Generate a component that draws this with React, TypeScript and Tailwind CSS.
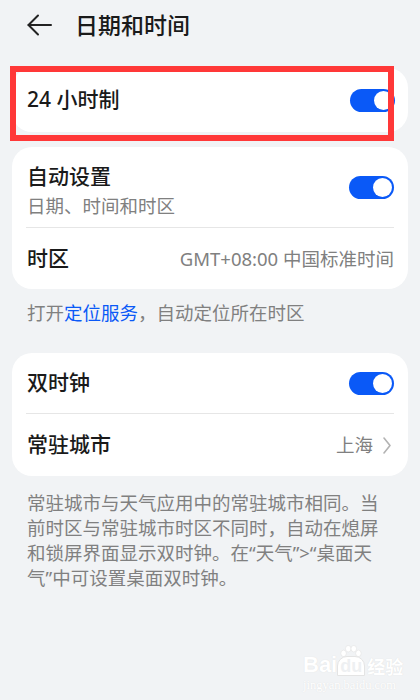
import React from "react";

function Toggle() {
  return (
    <div className="w-[45px] h-[23px] rounded-full bg-[#0a59f7] flex items-center justify-end pr-[2px] shrink-0">
      <div className="w-[19px] h-[19px] rounded-full bg-white" />
    </div>
  );
}

export default function App() {
  return (
    <div className="relative w-[420px] h-[700px] bg-[#f1f3f5] overflow-hidden font-['Noto_Sans','Noto_Sans_CJK_SC',sans-serif] text-[#1a1a1a]">
      {/* header */}
      <div className="h-[50px] flex items-center pl-[27px]">
        <svg width="25" height="22" viewBox="0 0 25 22" fill="none" stroke="#222" strokeWidth="2" strokeLinecap="round" strokeLinejoin="round">
          <path d="M11 1.5 L1.5 11 L11 20.5" />
          <path d="M1.5 11 H24" />
        </svg>
        <span className="ml-[23px] text-[23px] leading-none font-medium">日期和时间</span>
      </div>

      <div className="px-[12px]">
        {/* card 1 */}
        <div className="mt-[18px] h-[64px] rounded-[20px] bg-white flex items-center justify-between pl-[15px] pr-[13px]">
          <span className="text-[21px] font-medium">24 小时制</span>
          <Toggle />
        </div>

        {/* card 2 */}
        <div className="mt-[15px] rounded-[20px] bg-white px-[14px]">
          <div className="h-[80px] flex items-center justify-between pl-[1px]">
            <div className="flex flex-col pt-[8px]">
              <span className="text-[21px] leading-[29px] font-medium">自动设置</span>
              <span className="text-[18.5px] leading-[29px] text-[#808080]">日期、时间和时区</span>
            </div>
            <Toggle />
          </div>
          <div className="h-px bg-[#e6e6e6]" />
          <div className="h-[61px] flex items-center justify-between pl-[1px]">
            <span className="text-[21px] font-medium">时区</span>
            <span className="text-[18.5px] text-[#808080]">GMT+08:00 中国标准时间</span>
          </div>
        </div>

        {/* caption */}
        <div className="mt-[11px] pl-[15px] text-[18.5px] leading-[25px] text-[#808080]">
          打开<span className="text-[#0a59f7]">定位服务</span>，自动定位所在时区
        </div>

        {/* card 3 */}
        <div className="mt-[28px] rounded-[20px] bg-white px-[14px]">
          <div className="h-[60px] flex items-center justify-between pl-[1px]">
            <span className="text-[21px] font-medium">双时钟</span>
            <Toggle />
          </div>
          <div className="h-px bg-[#e6e6e6]" />
          <div className="h-[62px] flex items-center justify-between pl-[1px]">
            <span className="text-[21px] font-medium">常驻城市</span>
            <div className="flex items-center gap-[10px] pr-[3px]">
              <span className="text-[18.5px] text-[#808080]">上海</span>
              <svg width="8" height="17" viewBox="0 0 8 17" fill="none" stroke="#b3b3b3" strokeWidth="1.6" strokeLinecap="round" strokeLinejoin="round">
                <path d="M1 1 L7 8.5 L1 16" />
              </svg>
            </div>
          </div>
        </div>

        {/* paragraph */}
        <p className="mt-[14px] pl-[15px] pr-[14px] text-[18.5px] leading-[25px] text-[#808080]">
          常驻城市与天气应用中的常驻城市相同。当前时区与常驻城市时区不同时，自动在熄屏和锁屏界面显示双时钟。在“天气”&gt;“桌面天气”中可设置桌面双时钟。
        </p>
      </div>

      {/* red highlight box */}
      <div className="absolute left-[10px] top-[66px] w-[384px] h-[75px] border-[6px] border-[#ff3838]" />

      {/* watermark */}
      <div className="absolute left-[303px] top-[645px] flex flex-col items-start text-white [text-shadow:0_0_1px_#dadada]">
        <div className="flex items-end leading-none">
          <span className="text-[22px] font-bold font-['Liberation_Sans',sans-serif]">Bai</span>
          <div className="relative flex flex-col items-center">
            <svg width="26" height="13" viewBox="0 0 28 14" className="mb-[-2px]">
              <g fill="#fff" stroke="#e0e0e0" strokeWidth="0.6">
                <ellipse cx="6" cy="9" rx="3" ry="3.5" />
                <ellipse cx="11" cy="4" rx="3" ry="3.5" />
                <ellipse cx="17" cy="4" rx="3" ry="3.5" />
                <ellipse cx="22" cy="9" rx="3" ry="3.5" />
              </g>
            </svg>
            <span className="text-[18px] font-bold font-['Liberation_Sans',sans-serif] bg-white rounded-t-[10px] px-[2px] text-[#eef0f2] [text-shadow:none] border border-[#e4e4e4]">du</span>
          </div>
          <span className="text-[18px] font-bold ml-[2px]">经验</span>
        </div>
        <span className="text-[12.5px] leading-[18px] font-['Liberation_Serif',serif]">jingyan.baidu.com</span>
      </div>
    </div>
  );
}
